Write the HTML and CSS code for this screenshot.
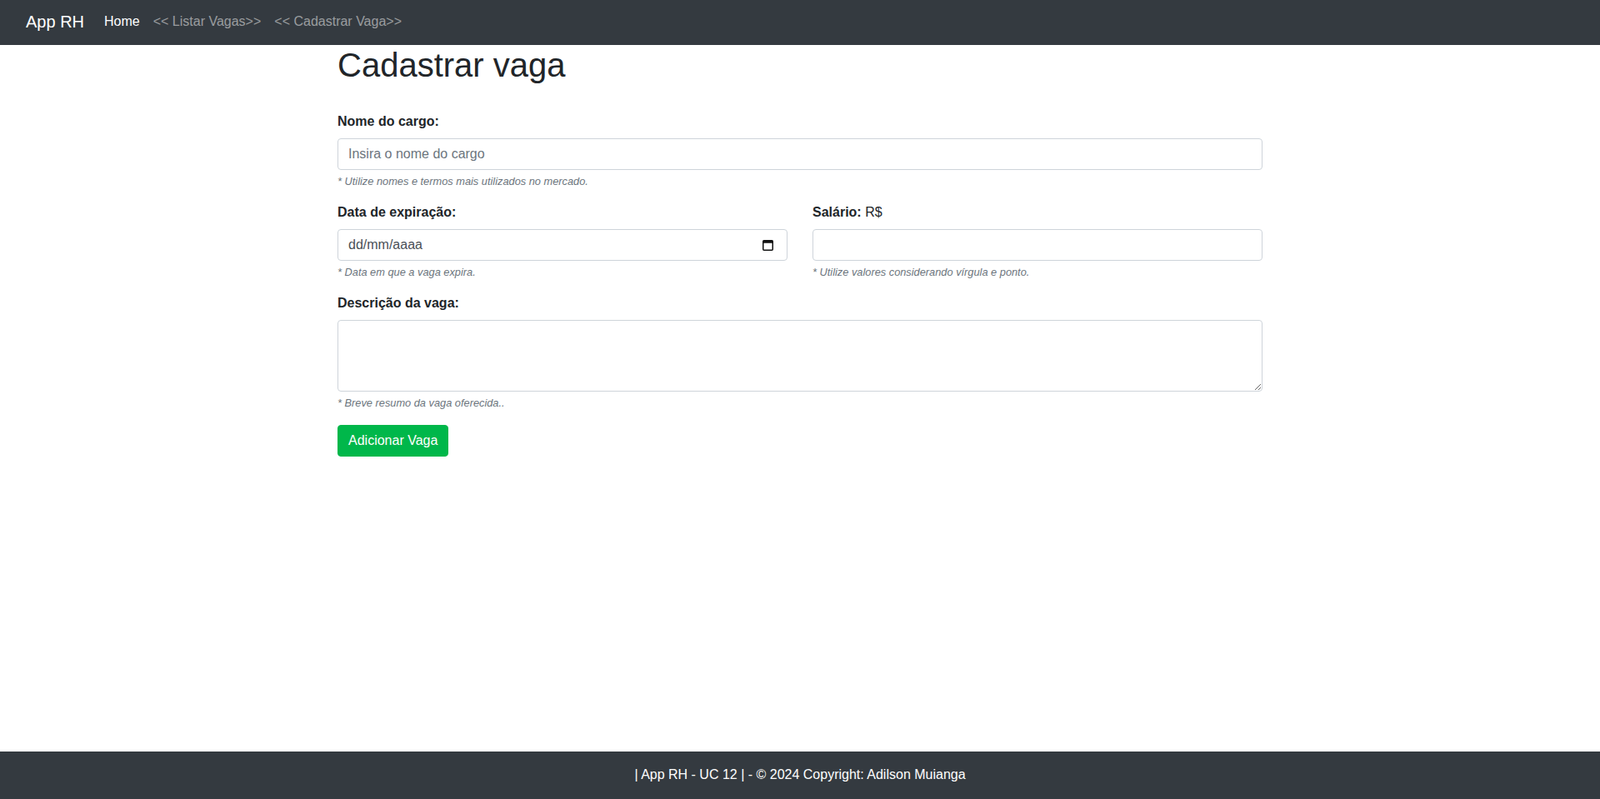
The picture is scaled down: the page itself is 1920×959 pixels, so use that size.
FILE: index.html
```html
<!DOCTYPE html>
<html lang="pt-BR">
<head>
<meta charset="utf-8">
<title>App RH</title>
<link rel="stylesheet" href="styles.css">
</head>
<body>
<nav class="navbar">
  <a class="brand" href="#">App RH</a>
  <ul class="nav">
    <li><a class="nav-link active" href="#">Home</a></li>
    <li><a class="nav-link" href="#">&lt;&lt; Listar Vagas&gt;&gt;</a></li>
    <li><a class="nav-link" href="#">&lt;&lt; Cadastrar Vaga&gt;&gt;</a></li>
  </ul>
</nav>
<main class="container">
  <h1 class="title">Cadastrar vaga</h1>
  <form class="form">
    <div class="group">
      <label class="label">Nome do cargo:</label>
      <input class="control" type="text" placeholder="Insira o nome do cargo">
      <small class="help">* Utilize nomes e termos mais utilizados no mercado.</small>
    </div>
    <div class="row">
      <div class="group">
        <label class="label">Data de expiração:</label>
        <div class="control date">
          <span>dd/mm/aaaa</span>
          <svg class="cal" width="13" height="14" viewBox="0 0 13 14"><rect x="0.75" y="1.75" width="11.5" height="11.5" rx="1" fill="none" stroke="#111" stroke-width="1.5"/><rect x="0.75" y="1.75" width="11.5" height="3" fill="#111"/></svg>
        </div>
        <small class="help">* Data em que a vaga expira.</small>
      </div>
      <div class="group">
        <label class="label"><b>Salário:</b> <span class="normal">R$</span></label>
        <input class="control" type="text">
        <small class="help">* Utilize valores considerando vírgula e ponto.</small>
      </div>
    </div>
    <div class="group">
      <label class="label">Descrição da vaga:</label>
      <textarea class="control area" rows="3"></textarea>
      <small class="help">* Breve resumo da vaga oferecida..</small>
    </div>
    <button class="btn" type="button">Adicionar Vaga</button>
  </form>
</main>
<footer class="footer">| App RH - UC 12 | - © 2024 Copyright: Adilson Muianga</footer>
</body>
</html>
```
FILE: styles.css
```css
* { box-sizing: border-box; }
html, body { margin: 0; }
body {
  font-family: "Liberation Sans", Arial, sans-serif;
  font-size: 16px;
  line-height: 1.5;
  color: #212529;
  background: #fff;
  min-height: 100vh;
  display: flex;
  flex-direction: column;
}
.navbar {
  background: #343a40;
  height: 54px;
  display: flex;
  align-items: center;
  padding: 0 31px 3px;
}
.brand {
  color: #fff;
  font-size: 20px;
  line-height: 30px;
  text-decoration: none;
  margin-right: 16px;
}
.nav {
  display: flex;
  list-style: none;
  margin: 0;
  padding: 0;
}
.nav-link {
  display: block;
  padding: 8px;
  color: rgba(255, 255, 255, 0.5);
  text-decoration: none;
  line-height: 24px;
}
.nav-link.active { color: #fff; }
.container {
  width: 1140px;
  margin: 0 auto;
  padding: 0 15px;
}
.title {
  font-size: 40px;
  font-weight: 400;
  line-height: 1.2;
  margin: 0 0 8px;
}
.form { padding-top: 24px; }
.group { margin-bottom: 16px; }
.row {
  display: grid;
  grid-template-columns: 1fr 1fr;
  column-gap: 30px;
}
.label {
  display: block;
  font-weight: 700;
  margin-bottom: 8px;
}
.label .normal { font-weight: 400; }
.control {
  display: block;
  width: 100%;
  height: 38px;
  padding: 6px 12px;
  font-family: inherit;
  font-size: 16px;
  line-height: 24px;
  color: #495057;
  background: #fff;
  border: 1px solid #ced4da;
  border-radius: 4px;
  margin: 0;
}
.control::placeholder { color: #6c757d; opacity: 1; }
.date {
  display: flex;
  align-items: center;
  justify-content: space-between;
  padding-right: 16px;
  color: #495057;
}
.cal { display: block; }
.area {
  height: 86px;
  resize: vertical;
}
.help {
  display: block;
  margin-top: 4px;
  font-size: 12.8px;
  line-height: 1.5;
  font-style: italic;
  color: #6c757d;
}
.btn {
  font-family: inherit;
  font-size: 16px;
  line-height: 24px;
  padding: 6px 12px;
  color: #fff;
  background: #00b74a;
  border: 1px solid #00b74a;
  border-radius: 4px;
}
.footer {
  margin-top: auto;
  background: #343a40;
  color: #fff;
  text-align: center;
  padding: 16px 0 17px;
  line-height: 24px;
}
```
